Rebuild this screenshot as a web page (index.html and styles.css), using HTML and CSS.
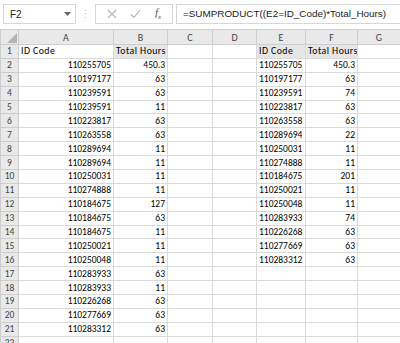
FILE: index.html
```html
<!DOCTYPE html>
<html lang="en">
  <head>
    <meta charset="UTF-8" />
    <title>Sheet</title>
    <link rel="stylesheet" href="styles.css">
  </head>
  <body>
    <div class="toolbar">
      <div class="name-box">
        <span>F2</span>
        <svg class="caret" width="7" height="4" viewBox="0 0 7 4"><path d="M0 0h7L3.5 4z" fill="#666"/></svg>
      </div>
      <div class="grip">⋮</div>
      <div class="buttons">
        <svg width="10" height="10" viewBox="0 0 10 10"><path d="M1 1l8 8M9 1l-8 8" stroke="#b4b4b4" stroke-width="1.1"/></svg>
        <svg width="11" height="10" viewBox="0 0 11 10"><path d="M1 5.5l3 3 6-7.5" stroke="#b4b4b4" stroke-width="1.1" fill="none"/></svg>
        <span class="fx">f<sub>x</sub></span>
      </div>
      <div class="formula">=SUMPRODUCT((E2=ID_Code)*Total_Hours)</div>
    </div>

    <table class="sheet">
      <colgroup>
        <col class="c-head"><col class="c-a"><col class="c-b"><col class="c-c">
        <col class="c-d"><col class="c-e"><col class="c-f"><col class="c-g">
      </colgroup>
      <thead>
        <tr>
          <th class="corner"><span class="tri"></span></th>
          <th>A</th><th>B</th><th>C</th><th>D</th><th>E</th><th>F</th><th>G</th>
        </tr>
      </thead>
      <tbody id="rows"></tbody>
    </table>

    <script>
      const left = [
        ["110255705", "450.3"], ["110197177", "63"], ["110239591", "63"],
        ["110239591", "11"], ["110223817", "63"], ["110263558", "63"],
        ["110289694", "11"], ["110289694", "11"], ["110250031", "11"],
        ["110274888", "11"], ["110184675", "127"], ["110184675", "63"],
        ["110184675", "11"], ["110250021", "11"], ["110250048", "11"],
        ["110283933", "63"], ["110283933", "11"], ["110226268", "63"],
        ["110277669", "63"], ["110283312", "63"]
      ];
      const right = [
        ["110255705", "450.3"], ["110197177", "63"], ["110239591", "74"],
        ["110223817", "63"], ["110263558", "63"], ["110289694", "22"],
        ["110250031", "11"], ["110274888", "11"], ["110184675", "201"],
        ["110250021", "11"], ["110250048", "11"], ["110283933", "74"],
        ["110226268", "63"], ["110277669", "63"], ["110283312", "63"]
      ];

      const body = document.getElementById("rows");
      let html = `<tr><th class="rh">1</th><td class="lbl">ID Code</td><td class="lbl fill">Total Hours</td><td></td><td></td>` +
        `<td class="lbl fill">ID Code</td><td class="lbl fill">Total Hours</td><td></td></tr>`;
      for (let i = 0; i < 21; i++) {
        const a = left[i] || ["", ""];
        const e = right[i] || ["", ""];
        html += `<tr><th class="rh">${i + 2}</th>` +
          `<td class="num">${a[0]}</td><td class="num">${a[1]}</td><td></td><td></td>` +
          `<td>${e[0]}</td><td class="num">${e[1]}</td><td></td></tr>`;
      }
      body.innerHTML = html;
    </script>
  </body>
</html>
```

FILE: styles.css
```css
* {
  margin: 0;
  padding: 0;
  box-sizing: border-box;
}

body {
  width: 400px;
  height: 343px;
  overflow: hidden;
  background: #fff;
  font-family: "Carlito", "Liberation Sans", sans-serif;
  color: #000;
}

.toolbar {
  display: flex;
  align-items: center;
  height: 28px;
  padding: 3px 0 3px 3px;
  background: #fff;
}

.name-box {
  display: flex;
  align-items: center;
  justify-content: space-between;
  width: 73px;
  height: 20px;
  padding: 0 4px 0 6px;
  border: 1px solid #d6d6d6;
  font-family: "Liberation Sans", sans-serif;
  font-size: 10px;
  color: #222;
}

.grip {
  width: 19px;
  text-align: center;
  font-size: 11px;
  color: #c6c6c6;
}

.buttons {
  display: flex;
  align-items: center;
  justify-content: space-around;
  width: 78px;
  height: 20px;
  padding: 0 4px;
  border: 1px solid #d6d6d6;
}

.fx {
  font-family: "Liberation Serif", serif;
  font-style: italic;
  font-size: 11px;
  color: #555;
}

.fx sub {
  font-size: 7px;
}

.formula {
  flex: 1;
  height: 20px;
  margin-left: 3px;
  padding: 3px 6px;
  border: 1px solid #d6d6d6;
  border-right: none;
  font-family: "Liberation Sans", sans-serif;
  font-size: 9.9px;
  color: #222;
  white-space: nowrap;
  overflow: hidden;
}

.sheet {
  table-layout: fixed;
  border-collapse: collapse;
  width: 400px;
  margin-top: 1px;
}

.c-head { width: 18px; }
.c-a { width: 95px; }
.c-b { width: 54px; }
.c-c { width: 45px; }
.c-d { width: 44px; }
.c-e { width: 49px; }
.c-f { width: 52px; }
.c-g { width: 43px; }

th {
  height: 15px;
  background: #e9e9e9;
  border: 1px solid #cdcdcd;
  font-weight: normal;
  font-size: 10px;
  color: #444;
  text-align: center;
}

.corner {
  position: relative;
}

.tri {
  position: absolute;
  right: 1px;
  bottom: 1px;
  width: 0;
  height: 0;
  border-left: 10px solid transparent;
  border-bottom: 10px solid #b5b5b5;
}

th.rh {
  height: 13.9px;
  font-size: 9.5px;
  text-align: center;
}

td {
  height: 13.9px;
  padding: 0 2px;
  border: 1px solid #dadada;
  font-size: 9.5px;
  line-height: 12px;
  white-space: nowrap;
  overflow: hidden;
}

td.lbl {
  font-size: 9.8px;
  letter-spacing: 0.45px;
}

td.num {
  text-align: right;
}

td.fill {
  background: #e7e6e6;
}
```
